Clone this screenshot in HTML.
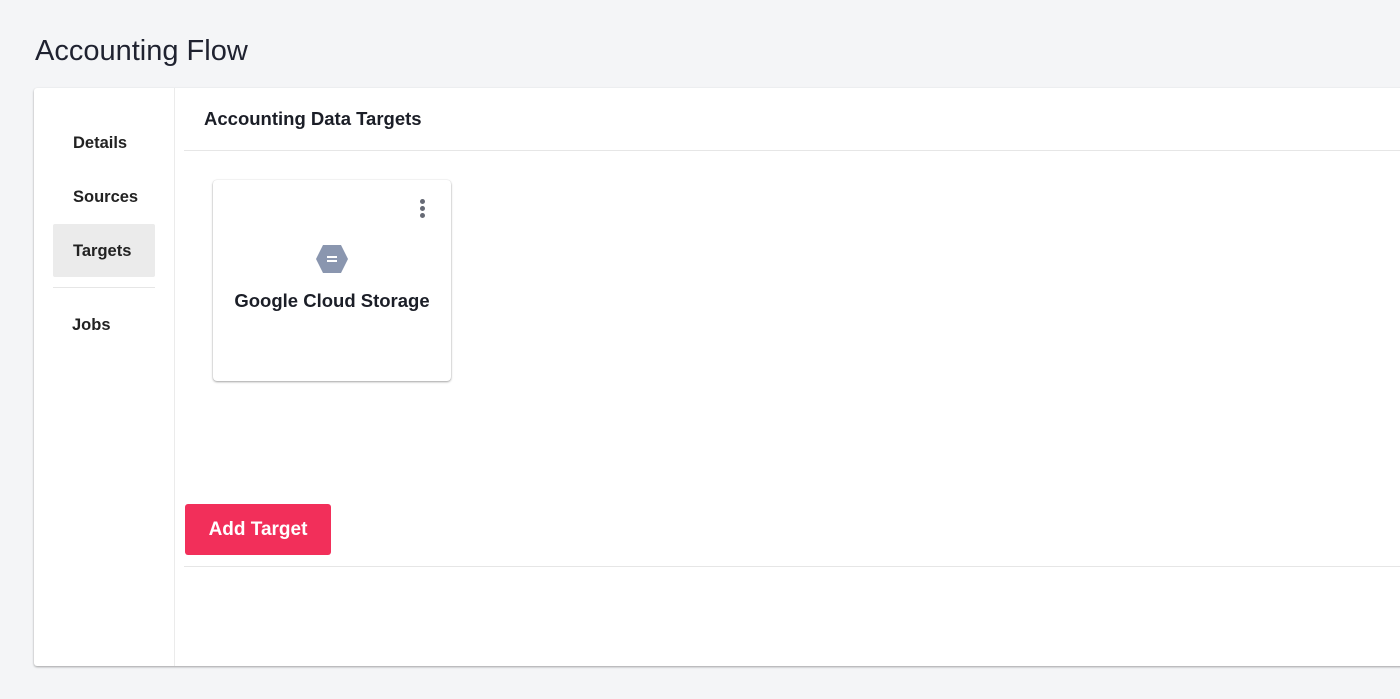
<!DOCTYPE html>
<html><head><style>
body{margin:0;width:1400px;height:699px;background:#f4f5f7;font-family:"Liberation Sans",sans-serif;position:relative;overflow:hidden;color:#1b1e27}
.abs{position:absolute}
h1{position:absolute;left:35px;top:35px;margin:0;font-weight:400;font-size:29px;color:#1f2230}
.panel{position:absolute;left:34px;top:88px;width:1380px;height:578px;background:#fff;border-radius:3px;box-shadow:0 1px 2px rgba(0,0,0,.35)}
.nav{position:absolute;font-size:16.5px;font-weight:bold;color:#222}
</style></head><body>
<h1>Accounting Flow</h1>
<div class="panel">
 <div class="abs" style="left:140px;top:0;width:1px;height:578px;background:#ebebeb"></div>
 <div class="nav" style="left:39px;top:46px">Details</div>
 <div class="nav" style="left:39px;top:100px">Sources</div>
 <div class="abs" style="left:19px;top:136px;width:102px;height:53px;background:#ebebeb;border-radius:2px"></div>
 <div class="nav" style="left:39px;top:154px">Targets</div>
 <div class="abs" style="left:19px;top:199px;width:102px;height:1px;background:#e6e6e6"></div>
 <div class="nav" style="left:38px;top:228px">Jobs</div>
 <div class="abs" style="left:170px;top:20px;font-size:18.5px;font-weight:bold;color:#1b1e27">Accounting Data Targets</div>
 <div class="abs" style="left:150px;top:62px;width:1230px;height:1px;background:#e6e6e6"></div>
 <div class="abs" style="left:179px;top:92px;width:238px;height:201px;background:#fff;border-radius:4px;box-shadow:0 1px 2px rgba(0,0,0,.35),0 0 1px rgba(0,0,0,.15)">
  <div class="abs" style="left:207px;top:19px;width:5px;height:5px;border-radius:50%;background:#666a75;box-shadow:0 7px 0 #666a75,0 14px 0 #666a75"></div>
  <svg class="abs" style="left:102px;top:64px" width="34" height="30" viewBox="0 0 34 30"><polygon points="8,1 26,1 33,15 26,29 8,29 1,15" fill="#8a96af"/><rect x="12" y="12" width="10" height="2" fill="#fff"/><rect x="12" y="16" width="10" height="2" fill="#fff"/></svg>
  <div class="abs" style="left:0;width:238px;top:110px;text-align:center;font-size:18.5px;font-weight:bold;color:#1b1e27">Google Cloud Storage</div>
 </div>
 <div class="abs" style="left:151px;top:416px;width:146px;height:51px;background:#f22f5a;border-radius:3px;color:#fff;font-size:19px;font-weight:bold;line-height:51px;text-align:center">Add Target</div>
 <div class="abs" style="left:150px;top:478px;width:1230px;height:1px;background:#e6e6e6"></div>
</div>
</body></html>
